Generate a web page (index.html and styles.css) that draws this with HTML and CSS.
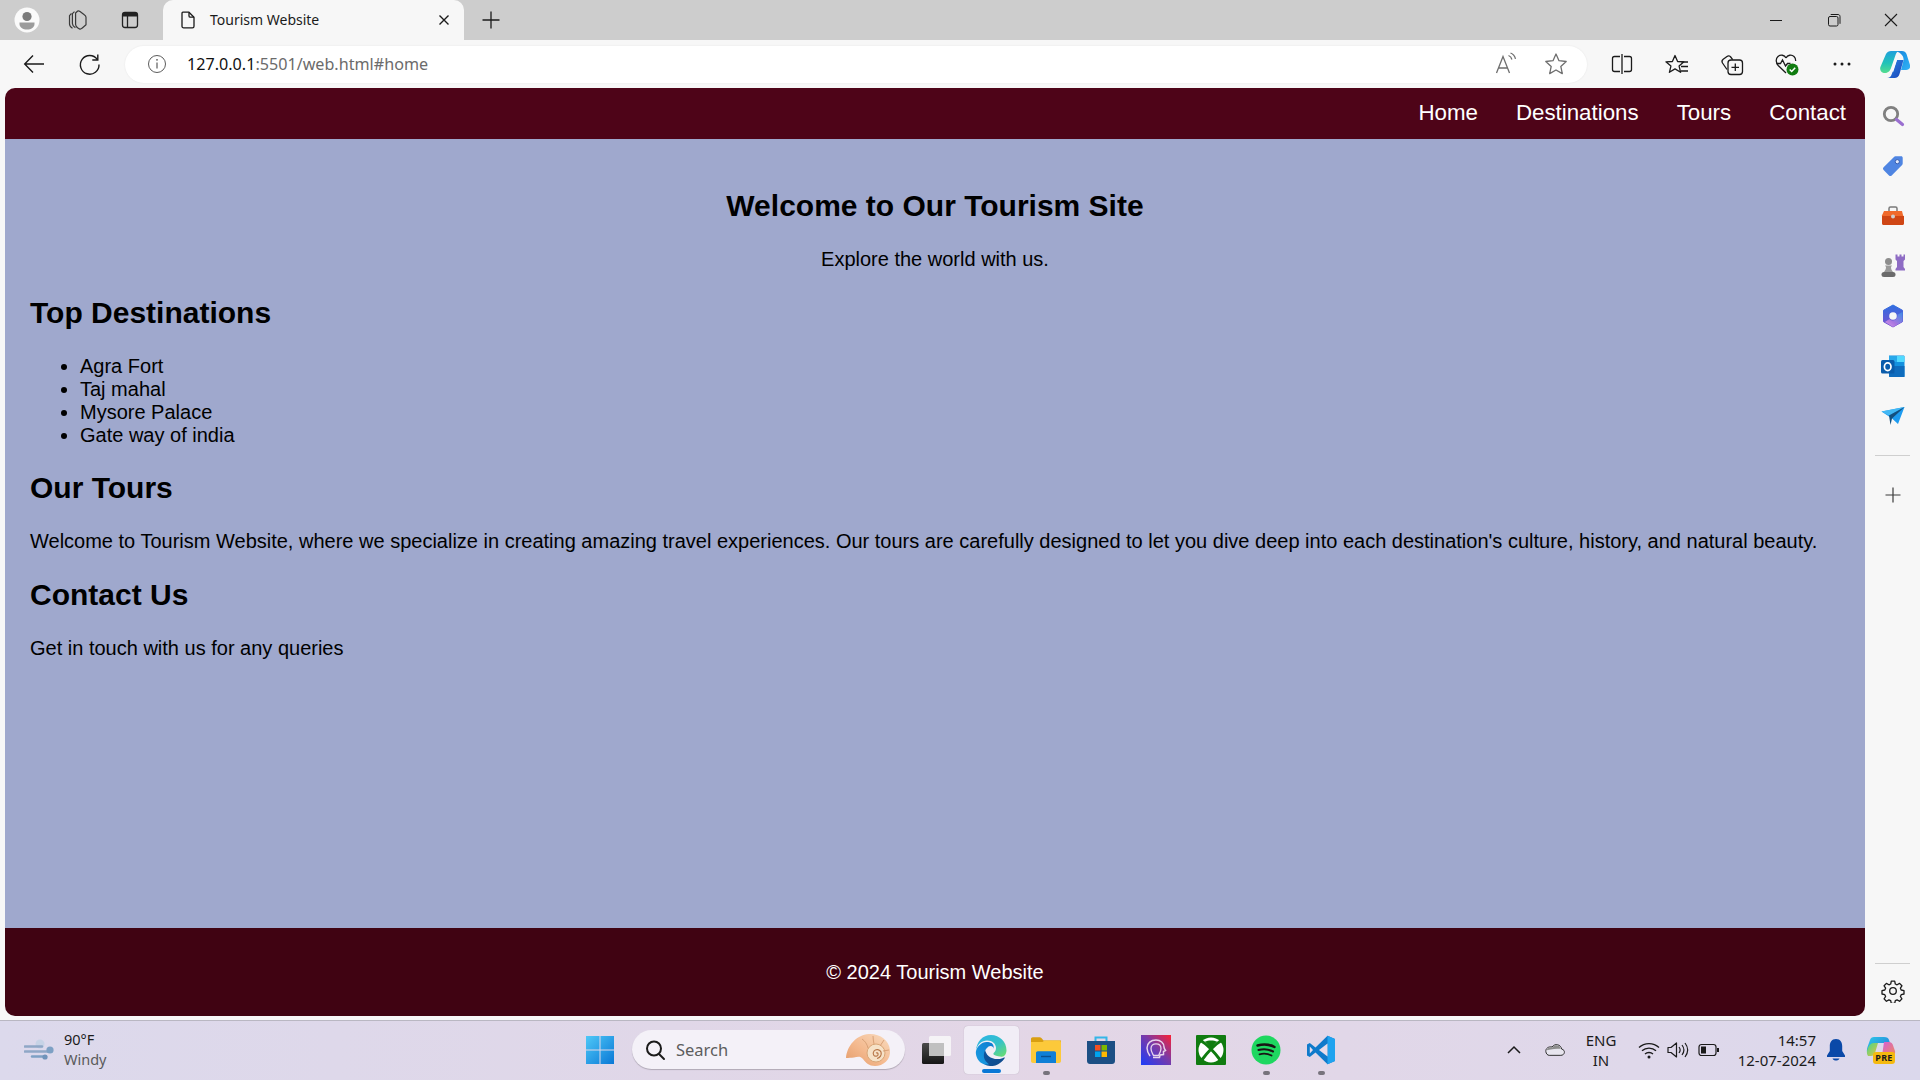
FILE: index.html
```html
<!DOCTYPE html>
<html lang="en">
<head>
<meta charset="utf-8">
<title>Tourism Website</title>
<link rel="stylesheet" href="styles.css">
</head>
<body>
<div class="app">
  <div class="tabstrip">
    <div class="strip-btn strip-btn-first">
      <svg width="30" height="30" viewBox="0 0 30 30"><circle cx="15" cy="15" r="12.5" fill="#fafafa"/><circle cx="15" cy="11.5" r="4.6" fill="#7b7b7b"/><path d="M7.5 17.5h15v1.5c0 3.5-3.4 5.5-7.5 5.5s-7.5-2-7.5-5.5z" fill="#9b9b9b"/></svg>
    </div>
    <div class="strip-btn">
      <svg width="24" height="24" viewBox="0 0 24 24" fill="none" stroke="#3a3a3a" stroke-width="1.2" stroke-linejoin="round"><path d="M5.5 5.5 3.5 7.6v8.5c0 2 1.4 3.3 3 4.2"/><path d="M8.5 3.6 6.4 5.7v9.8c0 2 1.4 3.2 3 4.2"/><path d="M11.7 3h0L9.6 5v11.5c0 1.400 1 2.600 2.300 3.400l1.600 1c1 .500 1.700.100 2.500-.700l4-3.500V9.300c0-1.200-.800-2-1.700-2.600L14 3.500c-.9-.6-1.600-.7-2.300-.5z"/></svg>
    </div>
    <div class="strip-btn">
      <svg width="24" height="24" viewBox="0 0 24 24" fill="none"><rect x="4.500" y="4.500" width="15" height="15" rx="2.500" stroke="#222" stroke-width="1.300"/><path d="M4.500 7a2.500 2.500 0 0 1 2.500-2.500h10A2.500 2.500 0 0 1 19.500 7v1.500h-15z" fill="#222"/><path d="M9.500 8v11" stroke="#222" stroke-width="1.300"/></svg>
    </div>
    <div class="tab">
      <svg width="20" height="20" viewBox="0 0 20 20" fill="none" stroke="#1b1b1b" stroke-width="1.300" stroke-linejoin="round"><path d="M5 2.200h6l5 5v9c0 1-.7 1.600-1.600 1.600H5.600c-.9 0-1.600-.6-1.600-1.600V3.800C4 2.900 4.200 2.200 5 2.200z"/><path d="M11 2.400v3.500c0 .8.500 1.300 1.300 1.300H16"/></svg>
      <span class="tab-title">Tourism Website</span>
      <svg class="tab-close" width="12" height="12" viewBox="0 0 12 12" stroke="#1b1b1b" stroke-width="1.400"><path d="M1.500 1.500l9 9M10.500 1.500l-9 9"/></svg>
    </div>
    <div class="new-tab">
      <svg width="20" height="20" viewBox="0 0 20 20" stroke="#1b1b1b" stroke-width="1.300"><path d="M10 1.500v17M1.500 10h17"/></svg>
    </div>
    <div class="win-controls">
      <div class="win-btn"><svg width="16" height="16" viewBox="0 0 16 16" stroke="#1b1b1b" stroke-width="1"><path d="M2 8.500h12"/></svg></div>
      <div class="win-btn"><svg width="16" height="16" viewBox="0 0 16 16" fill="none" stroke="#1b1b1b" stroke-width="1"><rect x="2.500" y="4.500" width="9.500" height="9.500" rx="1.500"/><path d="M4.700 2.500h7.300c1.200 0 2 .8 2 2v7.300"/></svg></div>
      <div class="win-btn"><svg width="16" height="16" viewBox="0 0 16 16" stroke="#1b1b1b" stroke-width="1.100"><path d="M2 2l12 12M14 2 2 14"/></svg></div>
    </div>
  </div>

  <div class="toolbar">
    <div class="tool-btn">
      <svg width="24" height="24" viewBox="0 0 24 24" fill="none" stroke="#1b1b1b" stroke-width="1.400"><path d="M22 12H3M11 3.500 2.700 12l8.300 8.500"/></svg>
    </div>
    <div class="tool-btn">
      <svg width="24" height="24" viewBox="0 0 24 24" fill="none" stroke="#1b1b1b" stroke-width="1.400"><path d="M19.300 7.500A9.300 9.300 0 1 0 21 12.500"/><path d="M19.800 2.500v5.500h-5.500"/></svg>
    </div>
    <div class="address">
      <svg class="addr-info" width="20" height="20" viewBox="0 0 20 20" fill="none" stroke="#5c5c5c" stroke-width="1"><circle cx="10" cy="10" r="8.500"/><path d="M10 8.500v6" stroke-width="1.200"/><circle cx="10" cy="5.800" r=".9" fill="#5c5c5c" stroke="none"/></svg>
      <span class="url"><span class="url-host">127.0.0.1</span>:5501/web.html#home</span>
      <div class="addr-tail">
        <svg width="24" height="24" viewBox="0 0 24 24" fill="none" stroke="#6e6e6e" stroke-width="1.300"><path d="M2.500 21 9 4.500 15.500 21M4.700 16h8.600"/><path d="M14.500 3.500c2 .8 3 2.200 3.400 4M16.500 1c2.900 1.100 4.300 3.200 5 5.800"/></svg>
        <svg width="26" height="26" viewBox="0 0 26 26" fill="none" stroke="#6e6e6e" stroke-width="1.300" stroke-linejoin="round"><path d="M13 3l3 6.700 7.200.8-5.400 4.900 1.500 7.200L13 19l-6.300 3.600 1.500-7.200-5.400-4.900 7.200-.8z"/></svg>
      </div>
    </div>
    <div class="tool-group">
      <div class="tool-btn tool-btn-wide"><svg width="24" height="24" viewBox="0 0 24 24" fill="none" stroke="#1b1b1b" stroke-width="1.300"><path d="M10 4.500H4.500c-1.200 0-2 .8-2 2v11c0 1.200.8 2 2 2H10M14 4.500h5.500c1.200 0 2 .8 2 2v11c0 1.200-.8 2-2 2H14M12 2v20"/></svg></div>
      <div class="tool-btn tool-btn-wide"><svg width="26" height="26" viewBox="0 0 26 26" fill="none" stroke="#1b1b1b" stroke-width="1.300" stroke-linejoin="round"><path d="M11 3l2.600 6 6.300.3-4.800 4.300 1.500 6.200-5.600-3.400-5.600 3.400 1.500-6.200L1.900 9.300 8.400 9z" transform="translate(0 1.500)"/><path d="M17.500 11h6.500M17 15.500h7M17 20h7"/></svg></div>
      <div class="tool-btn tool-btn-wide"><svg width="26" height="26" viewBox="0 0 26 26" fill="none" stroke="#1b1b1b" stroke-width="1.300" stroke-linejoin="round"><path d="M8 18.500 3.500 12c-.8-1.300-.5-2.800.7-3.700L8 5.500c1.200-.9 2.800-.7 3.700.5l2 2.700"/><rect x="9" y="9" width="14.500" height="14.500" rx="3"/><path d="M16.300 12.500v7.500M12.500 16.300H20"/></svg></div>
      <div class="tool-btn tool-btn-wide"><svg width="28" height="28" viewBox="0 0 28 28" fill="none"><path d="M13 8C11.500 5 7.500 4.200 5 6.500c-2.700 2.500-2 6.500.2 9L13 23" stroke="#1b1b1b" stroke-width="1.300"/><path d="M13 8c1.500-3 5.500-3.800 8-1.500 1.200 1.100 1.800 2.700 1.700 4.500" stroke="#1b1b1b" stroke-width="1.300"/><path d="M3.500 13.500h4l2-3.500 3 6 2-2.500h3" stroke="#1b1b1b" stroke-width="1.300"/><circle cx="19.500" cy="19.500" r="6" fill="#107c10"/><path d="M16.700 19.500l2 2 3.500-3.700" stroke="#fff" stroke-width="1.500"/></svg></div>
      <div class="tool-btn tool-btn-wide"><svg width="20" height="20" viewBox="0 0 20 20" fill="#1b1b1b"><circle cx="3" cy="10" r="1.500"/><circle cx="10" cy="10" r="1.500"/><circle cx="17" cy="10" r="1.500"/></svg></div>
      <div class="tool-btn tool-btn-last">
        <svg width="30" height="27" viewBox="0 0 30 27"><defs><linearGradient id="cpA" x1="0" y1="0" x2="1" y2="1"><stop offset="0" stop-color="#1a7fd6"/><stop offset=".5" stop-color="#1f9bea"/><stop offset="1" stop-color="#35b2f5"/></linearGradient><linearGradient id="cpB" x1="0" y1="0" x2="0" y2="1"><stop offset="0" stop-color="#1f9fdc"/><stop offset=".55" stop-color="#22c3b8"/><stop offset="1" stop-color="#55dd8f"/></linearGradient><linearGradient id="cpC" x1="0" y1="0" x2="1" y2="1"><stop offset="0" stop-color="#2a86e6"/><stop offset="1" stop-color="#1a44b8"/></linearGradient></defs><path d="M13 0h9c2.200 0 3.700 1 4.500 3L30 14c.8 2.700-1 5-4 5h-5l2.500-9.500C24.300 5 20 0 13 0z" fill="url(#cpA)"/><path d="M6 3C7 1 9 0 11 0h9c-2 0-3.500 1-4.300 3.500L11 17c-.8 2.500-2.500 5-6 5-3.800 0-5.500-3.300-4.600-6z" fill="url(#cpB)"/><path d="M17 9h6.500L19.500 23c-.7 2.500-2.500 4-5 4H7c2.500 0 4-1.500 4.800-4z" fill="url(#cpC)"/><path d="M16.500 8 12.800 20" stroke="#f4fbff" stroke-width="1.400" stroke-linecap="round"/></svg>
      </div>
    </div>
  </div>

  <div class="middle">
    <div class="page">
      <nav class="site-nav">
        <a class="nav-link" href="#home">Home</a>
        <a class="nav-link" href="#destinations">Destinations</a>
        <a class="nav-link" href="#tours">Tours</a>
        <a class="nav-link" href="#contact">Contact</a>
      </nav>
      <main class="site-main">
        <section class="hero">
          <h2>Welcome to Our Tourism Site</h2>
          <p>Explore the world with us.</p>
        </section>
        <section>
          <h2>Top Destinations</h2>
          <ul>
            <li>Agra Fort</li>
            <li>Taj mahal</li>
            <li>Mysore Palace</li>
            <li>Gate way of india</li>
          </ul>
        </section>
        <section class="tours">
          <h2>Our Tours</h2>
          <p>Welcome to Tourism Website, where we specialize in creating amazing travel experiences. Our tours are carefully designed to let you dive deep into each destination's culture, history, and natural beauty.</p>
        </section>
        <section>
          <h2>Contact Us</h2>
          <p>Get in touch with us for any queries</p>
        </section>
      </main>
      <footer class="site-footer"><p>© 2024 Tourism Website</p></footer>
    </div>

    <aside class="sidebar">
      <div class="side-btn"><svg width="24" height="24" viewBox="0 0 24 24" fill="none"><circle cx="10" cy="10" r="6.700" stroke="#808080" stroke-width="2.800"/><path d="M15.500 15.500l6 5" stroke="#9a6fd0" stroke-width="3.200" stroke-linecap="round"/></svg></div>
      <div class="side-btn"><svg width="24" height="24" viewBox="0 0 24 24"><path d="M2.600 13.300 13 2.900c.4-.4.800-.6 1.400-.6h5.800c.9 0 1.500.6 1.500 1.500v5.800c0 .6-.2 1-.6 1.400L10.700 21.400c-.8.800-1.900.8-2.700 0l-5.400-5.400c-.8-.8-.8-1.900 0-2.700z" fill="#4f85e2"/><circle cx="16.300" cy="7.700" r="2.100" fill="#dfe8fb" stroke="#2f55a8" stroke-width=".9"/></svg></div>
      <div class="side-btn"><svg width="24" height="24" viewBox="0 0 24 24"><path d="M8 7V4.500C8 3.600 8.600 3 9.500 3h5c.9 0 1.500.6 1.500 1.500V7" fill="none" stroke="#7a7a7a" stroke-width="1.500"/><path d="M3 7h18l1.300 5H.7z" fill="#f06a2c"/><path d="M1 12h22v7.500c0 .9-.6 1.500-1.500 1.500h-19C1.600 21 1 20.400 1 19.500z" fill="#cf4615"/><circle cx="12" cy="12.500" r="2" fill="#cfcfcf"/></svg></div>
      <div class="side-btn"><svg width="26" height="26" viewBox="0 0 26 26"><path d="M15.500 1.500h2v2h2v-2h2v2h2v-2h1.500v5l-1.500 1.500v6l1.500 2v1.500h-9.500V16l1.500-2V8l-1.500-1.500z" fill="#8e6cc4"/><circle cx="8.500" cy="8.500" r="3.500" fill="#8d8d8d"/><path d="M5 12.500h7l-1 1.500c0 2 .8 3.500 2 5H4c1.200-1.500 2-3 2-5z" fill="#9a9a9a"/><rect x="1.500" y="19" width="14" height="5" rx="2.500" fill="#6b6b6b"/></svg></div>
      <div class="side-btn"><svg width="24" height="24" viewBox="0 0 24 24"><defs><linearGradient id="m3A" x1="0" y1="0" x2="0" y2="1"><stop offset="0" stop-color="#2f6fe0"/><stop offset="1" stop-color="#7a4fd0"/></linearGradient><linearGradient id="m3B" x1="1" y1="0" x2="0" y2="1"><stop offset="0" stop-color="#3a8fe6"/><stop offset=".6" stop-color="#a875e0"/><stop offset="1" stop-color="#d79ae8"/></linearGradient></defs><path d="M12 1 21.500 6.300v11.400L12 23l-9.500-5.300V6.300z" fill="url(#m3A)" stroke="url(#m3A)" stroke-linejoin="round"/><path d="M12 23l9.500-5.300V8l-5 2.800c.3 2.500-1.500 5.700-4.500 5.700-1.200 0-2.500-.500-3.500-1.500L4 18z" fill="url(#m3B)"/><circle cx="12" cy="12" r="3.800" fill="#f7f7f7"/></svg></div>
      <div class="side-btn"><svg width="24" height="24" viewBox="0 0 24 24"><path d="M8 1.500h14.500c.5 0 1 .5 1 1V22c0 .5-.5 1-1 1H9c-.5 0-1-.5-1-1z" fill="#1490df"/><path d="M8 2h8v6H8z" fill="#28a8ea"/><path d="M16 2h7.500v6H16z" fill="#50d9ff"/><path d="M8 12h15.500v11H9c-.5 0-1-.5-1-1z" fill="#0f6cbd"/><rect x="0" y="6" width="13.500" height="13.500" rx="1.500" fill="#0a5cab"/><ellipse cx="6.700" cy="12.700" rx="3.300" ry="3.900" fill="none" stroke="#fff" stroke-width="1.700"/></svg></div>
      <div class="side-btn"><svg width="24" height="24" viewBox="0 0 24 24"><path d="M.5 7.500 23.500 3 17 20l-6-5.500z" fill="#1d9bf0"/><path d="M.5 7.500 23.500 3 8 11.500z" fill="#42b8f4"/><path d="M8 11.500l15.500-8.500L11 14.500 9.500 21z" fill="#14507f"/></svg></div>
      <div class="side-rule"></div>
      <div class="side-btn"><svg width="18" height="18" viewBox="0 0 18 18" stroke="#3b3b3b" stroke-width="1.200"><path d="M9 1.500v15M1.500 9h15"/></svg></div>
      <div class="side-fill"></div>
      <div class="side-rule side-rule-low"></div>
      <div class="side-btn"><svg width="24" height="24" viewBox="0 0 24 24" fill="none" stroke="#1b1b1b" stroke-width="1.300" stroke-linejoin="round"><circle cx="12" cy="12" r="3.300"/><path d="M10.300 2.200h3.400l.6 2.800 1.800.8 2.500-1.400 2.300 2.400-1.500 2.400.8 1.800 2.800.7v3.300l-2.800.7-.8 1.800 1.500 2.400-2.300 2.400-2.500-1.400-1.800.8-.6 2.800h-3.400l-.6-2.800-1.800-.8-2.500 1.400-2.300-2.400 1.500-2.400-.8-1.800-2.800-.7v-3.300l2.800-.7.8-1.800-1.500-2.400 2.300-2.400 2.500 1.400 1.800-.8z"/></svg></div>
    </aside>
  </div>

  <div class="taskbar">
    <div class="tb-left">
      <svg width="34" height="26" viewBox="0 0 34 26"><circle cx="16" cy="7" r="4.500" fill="#c7d3e6"/><path d="M1 9.500h17M1 14.500h26" stroke="#8fa7c6" stroke-width="2.600" stroke-linecap="round"/><circle cx="26" cy="13" r="3.600" fill="#7da0c4"/><path d="M8 19.500h14" stroke="#7da0c4" stroke-width="2.400" stroke-linecap="round"/><circle cx="21" cy="20" r="2.600" fill="#7093ba"/></svg>
      <div class="weather">
        <span class="weather-temp">90°F</span>
        <span class="weather-state">Windy</span>
      </div>
    </div>
    <div class="tb-slot">
      <svg width="30" height="30" viewBox="0 0 30 30"><defs><linearGradient id="winA" x1="0" y1="0" x2="1" y2="1"><stop offset="0" stop-color="#4fc8f7"/><stop offset="1" stop-color="#0a78d6"/></linearGradient></defs><path d="M1 1h13.500v13.500H1zM15.500 1H29v13.500H15.500zM1 15.500h13.500V29H1zM15.500 15.500H29V29H15.500z" fill="url(#winA)"/></svg>
    </div>
    <div class="search">
      <svg width="24" height="24" viewBox="0 0 24 24" fill="none" stroke="#1b1b1b" stroke-width="2"><circle cx="11" cy="10.500" r="7"/><path d="M16 16l5 5" stroke-linecap="round"/></svg>
      <span class="search-label">Search</span>
      <svg class="search-shell" width="46" height="34" viewBox="0 0 46 34"><defs><linearGradient id="shA" x1="0" y1="1" x2="1" y2="0"><stop offset="0" stop-color="#e39a68"/><stop offset=".45" stop-color="#f4b98e"/><stop offset="1" stop-color="#f8dcc0"/></linearGradient></defs><path d="M1 25C2 13 11 2 24 1c11-.5 20 6 21 16s-7 16-15 16c-6 0-9-3-12-7-3-3.500-6-2-9-1.500-3 .300-5 .500-8 .500z" fill="url(#shA)"/><circle cx="31" cy="20" r="9" fill="#f6e2c8" stroke="#d9a778"/><path d="M31 20c2-1 3 2 1 3-3 1-5-2-3-5 2-2.500 6-1.500 7 1 1 3-1 6-4 6.500" fill="none" stroke="#b9784a" stroke-width="1.200"/><path d="M17 6c3 2 5 5 6 9M28 3c0 3 .5 5 1 8M39 7l-4 6M44 17l-6 1" fill="none" stroke="#d9a278" stroke-width="1"/></svg>
    </div>
    <div class="tb-slot tb-slot-first">
      <svg width="30" height="30" viewBox="0 0 30 30"><defs><linearGradient id="tvA" x1="0" y1="0" x2="0" y2="1"><stop offset="0" stop-color="#4a4a4a"/><stop offset="1" stop-color="#161616"/></linearGradient></defs><rect x="1" y="8" width="22" height="21" rx="1.500" fill="url(#tvA)"/><rect x="8" y="1" width="22" height="20" rx="1.500" fill="#f8f8f8" fill-opacity=".85"/><rect x="8" y="8" width="15" height="13" fill="#bdbdbd" fill-opacity=".9"/></svg>
    </div>
    <div class="tb-slot tb-slot-active">
      <svg width="32" height="32" viewBox="0 0 32 32"><defs><linearGradient id="edA" x1="0" y1="0" x2="1" y2="1"><stop offset="0" stop-color="#0c59a4"/><stop offset="1" stop-color="#114a8b"/></linearGradient><linearGradient id="edB" x1="0" y1="1" x2="1" y2="0"><stop offset="0" stop-color="#1b9de2"/><stop offset="1" stop-color="#0d7cd0"/></linearGradient><linearGradient id="edC" x1="0" y1="0" x2="1" y2="1"><stop offset="0" stop-color="#2bb2e8"/><stop offset=".55" stop-color="#35c1c9"/><stop offset="1" stop-color="#6fe068"/></linearGradient></defs><path d="M28.900 23.500c-.5.300-1 .5-1.500.7-1.600.6-3.300.9-5 .9-6.600 0-12.300-4.500-12.300-10.400 0-1.700 1-3.100 2.400-3.900-6 .3-7.500 6.500-7.500 10.100 0 10.200 9.400 11.200 11.400 11.200 1.100 0 2.800-.3 3.800-.6l.2-.1c3.900-1.300 7.200-4 9.400-7.500.2-.3-.1-.6-.4-.4z" fill="url(#edA)"/><path d="M14 30.200c-1.200-.8-2.300-1.700-3.200-2.900-3.300-4.600-2.300-11 2.200-14.400.5-.3.800-.5 1-.6.3-.1.8-.4 1.500-.4 1 0 1.800.4 2.400 1.200.4.500.6 1.100.6 1.800 0 0 2.100-7-7-7C6.500 8 2 12.500 1 17c-.4 1.700 0 4 .6 5.700 2 5.500 7 9 12.400 7.500z" fill="url(#edB)"/><path d="M19.100 18.600c-.2.200-.7.500-.7 1.100 0 .5.300 1 .9 1.400 2.600 1.800 7.500 1.600 7.500 1.600 2.900 0 4.700-3.400 4.700-6.500C31.500 8 24.700 1 16 1 7.700 1 1.500 7.600 1 17c1-6.500 6-10.500 11-10.500 5.500 0 9 3.500 9 7.500 0 2.500-1.300 3.900-1.900 4.600z" fill="url(#edC)"/></svg>
      <span class="active-bar"></span>
    </div>
    <div class="tb-slot tb-slot-open">
      <svg width="30" height="30" viewBox="0 0 30 30"><path d="M0 4c0-1 .7-1.700 1.700-1.700h7c.7 0 1.200.3 1.700.8L12.500 5.500H30V9H0z" fill="#d99f12"/><path d="M0 7h11.500l2-1.500H28c1.100 0 2 .9 2 2V26c0 1.100-.9 2-2 2H2c-1.100 0-2-.9-2-2z" fill="#fcc93a"/><path d="M5 18c0-1 .8-1.800 1.800-1.800h16.400c1 0 1.800.8 1.800 1.800v10H5z" fill="#0f7fd6"/><path d="M10 21.500h10" stroke="#0b4f8e" stroke-width="1.400"/></svg>
      <span class="open-dot"></span>
    </div>
    <div class="tb-slot">
      <svg width="30" height="30" viewBox="0 0 30 30"><path d="M9.500 6V2.500h11V6" fill="none" stroke="#35b6e8" stroke-width="2"/><path d="M1 6h28v20c0 1.700-1.300 3-3 3H4c-1.700 0-3-1.300-3-3z" fill="#1c4f84"/><rect x="9" y="10" width="5.500" height="5.500" fill="#f25022"/><rect x="15.500" y="10" width="5.500" height="5.500" fill="#7fba00"/><rect x="9" y="16.500" width="5.500" height="5.500" fill="#00a4ef"/><rect x="15.500" y="16.500" width="5.500" height="5.500" fill="#ffb900"/></svg>
    </div>
    <div class="tb-slot">
      <svg width="30" height="30" viewBox="0 0 30 30"><defs><linearGradient id="spA" x1="0" y1="1" x2="1" y2="0"><stop offset="0" stop-color="#1b3dfa"/><stop offset=".55" stop-color="#7a3aa8"/><stop offset="1" stop-color="#fb2133"/></linearGradient></defs><rect width="30" height="30" fill="url(#spA)"/><path d="M9 21c-2-3-3-5-3-8 0-5 4-8 9-8 4.500 0 8 3 8 7 0 1 .5 2 1.500 3.500l-2 1v3l-3.500.5-.5 2.500H12" fill="none" stroke="#e8d4ec" stroke-width="1.500"/><path d="M12.500 20.500c-1-2-2.500-3.500-2.500-7 0-3 2.300-4.700 5-4.700s5 1.700 5 4.700c0 3-1.500 5-2.500 7z" fill="none" stroke="#e8d4ec" stroke-width="1.300"/></svg>
    </div>
    <div class="tb-slot">
      <svg width="30" height="30" viewBox="0 0 30 30"><rect width="30" height="30" rx="1" fill="#107c10"/><circle cx="15" cy="15" r="12.500" fill="#fff"/><path d="M4.500 5.500C10 8.500 19 18 25 26M25.500 5.500C20 8.500 11 18 5 26" fill="none" stroke="#107c10" stroke-width="3"/><path d="M15 13 9 6.500C12 5 18 5 21 6.500z" fill="#107c10"/></svg>
    </div>
    <div class="tb-slot tb-slot-open">
      <svg width="30" height="30" viewBox="0 0 30 30" fill="none" stroke="#191414" stroke-linecap="round"><circle cx="15" cy="15" r="14.500" fill="#1ed760" stroke="none"/><path d="M6.500 10.500c5.500-1.700 12-1.200 17 1.500" stroke-width="2.500"/><path d="M7.500 15c4.700-1.300 10-.900 14.500 1.500" stroke-width="2.100"/><path d="M8.500 19.300c4-1 8.300-.7 12 1.200" stroke-width="1.800"/></svg>
      <span class="open-dot"></span>
    </div>
    <div class="tb-slot tb-slot-open">
      <svg width="30" height="30" viewBox="0 0 30 30"><path d="M21.500.8 29 4v22l-7.500 3.200L9.500 17.500 3.800 22 1 20.500V9.500L3.800 8l5.700 4.500z" fill="#0e7acb"/><path d="M21.500.8 29 4v22l-7.500 3.200z" fill="#1fa3ef"/><path d="M21.500 8.500 13 15l8.500 6.500z" fill="#e6dcea"/><path d="M3.800 11.500 7 15l-3.200 3.500z" fill="#e6dcea"/></svg>
      <span class="open-dot"></span>
    </div>
    <div class="tray">
      <svg class="tray-chevron" width="16" height="16" viewBox="0 0 16 16" fill="none" stroke="#1b1b1b" stroke-width="1.500"><path d="M2 11l6-6 6 6"/></svg>
      <svg class="tray-cloud" width="20" height="15" viewBox="0 0 24 18"><path d="M5 16h14c5 0 6-6.500 1-7.500C19 3 12 1 8.500 6 4 5 .5 8 1 11.500 1.300 14 3 16 5 16z" fill="#e7e5ee" stroke="#2f2f2f" stroke-width="1.200"/><path d="M2 10c1-3 4-4.500 7-3.500C11 3 17 3 19 8c-6 0-10 0-17 2z" fill="#8c8c8c"/></svg>
      <div class="lang"><span>ENG</span><span>IN</span></div>
      <svg class="tray-wifi" width="22" height="18" viewBox="0 0 22 18" fill="none" stroke="#1b1b1b" stroke-width="1.300"><path d="M1 6.500c5.500-5.300 14.500-5.300 20 0M4 9.800c3.800-3.600 10.200-3.600 14 0M7 13c2.200-2 5.800-2 8 0"/><circle cx="11" cy="16" r="1.500" fill="#1b1b1b" stroke="none"/></svg>
      <svg class="tray-vol" width="22" height="18" viewBox="0 0 22 18" fill="none" stroke="#1b1b1b" stroke-width="1.200" stroke-linejoin="round"><path d="M1 6.500h3L9.500 2v14L4 11.500H1z"/><path d="M12 6c1.300 1.700 1.300 4.300 0 6M15 4c2.300 3 2.300 7 0 10M18 2c3.300 4.300 3.300 9.700 0 14"/></svg>
      <svg class="tray-batt" width="22" height="14" viewBox="0 0 22 14" fill="none" stroke="#1b1b1b" stroke-width="1.200"><rect x="1" y="1.500" width="17" height="11" rx="2.500"/><rect x="3" y="3.500" width="5" height="7" fill="#1b1b1b" stroke="none"/><path d="M20 5v4" stroke-width="2"/></svg>
      <div class="clock"><span>14:57</span><span>12-07-2024</span></div>
      <svg class="tray-bell" width="20" height="24" viewBox="0 0 20 24"><path d="M10 1C5.500 1 3.800 4.500 3.800 8v5L1 17.500V19h18v-1.500L16.200 13V8C16.200 4.500 14.500 1 10 1z" fill="#0a49a8"/><path d="M6.500 20.500c.6 1.500 2 2 3.500 2s2.900-.5 3.500-2z" fill="#0a49a8"/></svg>
      <div class="pre">
        <svg width="30" height="24" viewBox="0 0 30 24"><defs><linearGradient id="prA" x1="0" y1="0" x2="1" y2="1"><stop offset="0" stop-color="#2ec9e8"/><stop offset="1" stop-color="#1e6fd8"/></linearGradient><linearGradient id="prB" x1="0" y1="0" x2="1" y2="1"><stop offset="0" stop-color="#44d78b"/><stop offset="1" stop-color="#e8c33e"/></linearGradient><linearGradient id="prC" x1="0" y1="0" x2="1" y2="1"><stop offset="0" stop-color="#d25fd8"/><stop offset="1" stop-color="#f08a5a"/></linearGradient></defs><path d="M8 2h10c3 0 4.500 1 5 3l1 3H10C6 8 4 13 3 20 .5 19 .5 15 1.500 12L4 5c.6-2 2-3 4-3z" fill="url(#prA)"/><path d="M2 21c-1.500-2-1.500-5 0-8 1-3 3-5 6-5h4l-3 10c-.5 2-2 3-4 3z" fill="url(#prB)"/><path d="M18 7h5c1.800 0 3 1 3.700 2.500L29 16c.7 2.500-1 5-4 5h-9z" fill="url(#prC)"/></svg>
        <span class="pre-tag">PRE</span>
      </div>
    </div>
  </div>
</div>
</body>
</html>
```

FILE: styles.css
```css
* { box-sizing: border-box; }
html, body { margin: 0; height: 100%; }
body { font-family: "Noto Sans", "Open Sans", sans-serif; color: #1b1b1b; overflow: hidden; }
svg { display: block; flex: none; }

.app { width: 1920px; height: 1080px; display: flex; flex-direction: column; background: #f7f7f7; }

/* Tab strip */
.tabstrip { height: 40px; flex: none; display: flex; align-items: stretch; background: #cdcdcd; }
.strip-btn { width: 52px; display: flex; align-items: center; justify-content: center; }
.strip-btn-first { padding-left: 2px; }
.tab { width: 301px; margin-left: 7px; display: flex; align-items: center; padding-left: 15px; background: #f7f7f7; border-radius: 10px 10px 0 0; }
.tab-title { margin-left: 12px; font-size: 14px; line-height: 20px; }
.tab-close { margin-left: auto; margin-right: 14px; }
.new-tab { width: 54px; display: flex; align-items: center; justify-content: center; }
.win-controls { margin-left: auto; display: flex; }
.win-btn { width: 57.500px; display: flex; align-items: center; justify-content: center; }

/* Toolbar */
.toolbar { height: 48px; flex: none; display: flex; align-items: center; padding-left: 6px; }
.tool-btn { width: 56px; height: 40px; flex: none; display: flex; align-items: center; justify-content: center; }
.tool-btn-wide { width: 55px; }
.tool-btn-last { width: 51px; }
.address { width: 1462px; height: 37px; flex: none; margin-left: 7px; display: flex; align-items: center; padding-left: 22px; background: #fff; border-radius: 19px; box-shadow: 0 0 2px rgba(0, 0, 0, .08); }
.url { margin-left: 20px; font-size: 16.150px; line-height: 22px; color: #6b6b6b; }
.url-host { color: #111; }
.addr-tail { margin-left: auto; display: flex; align-items: center; gap: 25px; padding-right: 18px; }
.tool-group { display: flex; margin-left: 7px; }

/* Middle */
.middle { flex: 1; display: flex; min-height: 0; }
.page { width: 1860px; margin: 0 0 4px 5px; display: flex; flex-direction: column; font-family: "Liberation Sans", Arial, sans-serif; font-size: 20px; line-height: 23px; color: #000; }

.site-nav { height: 51px; flex: none; display: flex; justify-content: flex-end; align-items: center; gap: 38px; padding: 0 19px 1px 0; background: #4e0418; border-radius: 10px 10px 0 0; }
.nav-link { font-size: 22.300px; line-height: 26px; color: #fff; text-decoration: none; }

.site-main { flex: 1; padding: 25px; background: #9fa8cd; }
.site-main h2 { margin: 25px 0; font-size: 30px; line-height: 34px; font-weight: 700; }
.site-main .tours h2 { margin-top: 24px; }
.site-main p { margin: 20px 0; }
.site-main ul { margin: 20px 0 0; padding-left: 50px; }
.hero { text-align: center; }

.site-footer { height: 88px; flex: none; display: flex; align-items: center; justify-content: center; background: #400312; color: #fff; border-radius: 0 0 10px 10px; }
.site-footer p { margin: 0; }

/* Sidebar */
.sidebar { flex: 1; display: flex; flex-direction: column; align-items: center; padding: 3px 0 4px; }
.side-btn { width: 54px; height: 50px; flex: none; display: flex; align-items: center; justify-content: center; }
.side-rule { width: 35px; height: 1px; flex: none; margin: 14px 0; background: #cfcfcf; }
.side-fill { flex: 1; }
.side-rule-low { margin: 0 0 2px; }

/* Taskbar */
.taskbar { height: 60px; flex: none; display: flex; align-items: center; padding-bottom: 2px; border-top: 1px solid #b9b7c2; background: linear-gradient(90deg, #dcd9ec 0%, #e0d7e8 35%, #e3d6e6 55%, #dfd8ea 85%, #dbd8ec 100%); }
.tb-left { width: 572px; display: flex; align-items: center; padding-left: 24px; }
.weather { display: flex; flex-direction: column; margin-left: 6px; font-size: 14.500px; line-height: 19.500px; }
.weather-temp { color: #1b1b1b; }
.weather-state { color: #5a5a5a; }
.tb-slot { position: relative; width: 55px; height: 48px; flex: none; display: flex; align-items: center; justify-content: center; }
.tb-slot-first { margin-left: 3.500px; }
.tb-slot-active { background: #f1edf6; border-radius: 4px; box-shadow: 0 0 1px rgba(0, 0, 0, .25); }
.active-bar { position: absolute; left: 18px; bottom: 1px; width: 19px; height: 4px; border-radius: 2px; background: #0a78d6; }
.open-dot { position: absolute; left: 24px; bottom: -1px; width: 7px; height: 4px; border-radius: 2px; background: #77737c; }
.search { width: 273px; height: 39px; flex: none; margin-left: 5px; display: flex; align-items: center; padding-left: 11px; background: #f4f1f8; border-radius: 20px; box-shadow: 0 1px 1px rgba(0, 0, 0, .22); }
.search-label { margin-left: 9px; font-size: 16.500px; line-height: 22px; color: #5d5d5d; }
.search-shell { margin-left: auto; margin-right: 14px; }

.tray { margin-left: auto; display: flex; align-items: center; padding-right: 24px; }
.tray-chevron { margin-right: 23px; }
.tray-cloud { margin-right: 13.500px; }
.lang { width: 46px; display: flex; flex-direction: column; align-items: center; font-size: 15px; line-height: 20px; color: #1b1b1b; margin-right: 14px; }
.tray-wifi { margin-right: 7px; }
.tray-vol { margin-right: 9px; }
.clock { width: 96px; display: flex; flex-direction: column; align-items: flex-end; font-size: 15px; line-height: 20px; color: #1b1b1b; margin-right: 10px; }
.tray-bell { margin-right: 20px; }
.pre { position: relative; width: 30px; height: 30px; }
.pre-tag { position: absolute; left: 7px; top: 17px; width: 22px; height: 12px; border-radius: 3px; background: #f5b90f; color: #1b1b1b; font-size: 9px; line-height: 12px; font-weight: 700; text-align: center; letter-spacing: .3px; }
```
